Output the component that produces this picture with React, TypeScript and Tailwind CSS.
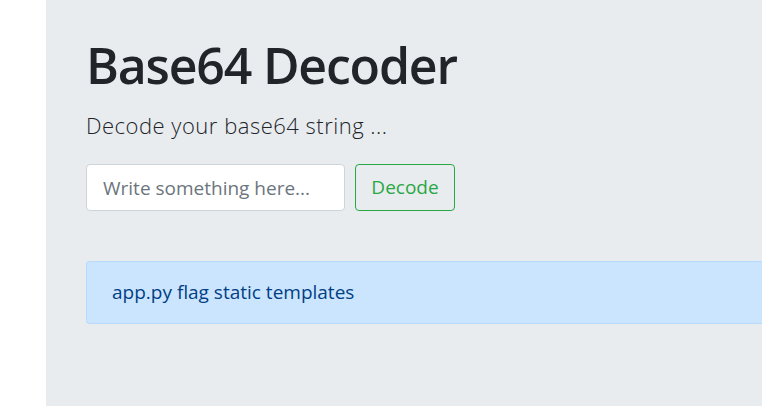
export default function App() {
  return (
    <div className="flex min-h-[406px] w-full overflow-hidden bg-white font-['Open_Sans',sans-serif]">
      <div className="w-[46px] shrink-0" />
      <div className="min-w-[900px] flex-1 bg-[#e9ecef] pl-[40px] pt-[35px] pb-[82px]">
        <h1 className="text-[50px] font-semibold leading-[1.2] tracking-[-1.2px] text-[#212529]">Base64 Decoder</h1>
        <p className="mt-[14px] text-[22px] font-light leading-[1.5] tracking-[0.5px] text-[#212529]">Decode your base64 string ...</p>

        <form className="mt-[22px] flex gap-[10px]" onSubmit={(e) => e.preventDefault()}>
          <input
            type="text"
            placeholder="Write something here..."
            className="h-[47px] w-[259px] rounded-[4px] border border-[#ced4da] bg-white px-[16px] text-[19px] text-[#495057] placeholder:text-[#6c757d] outline-none"
          />
          <button
            type="submit"
            className="h-[47px] w-[100px] rounded-[4px] border border-[#28a745] text-[19px] text-[#28a745]"
          >
            Decode
          </button>
        </form>

        <div className="mt-[50px] flex h-[63px] items-center rounded-l-[4px] border border-r-0 border-[#b8daff] bg-[#cce5ff] pl-[25px] text-[19px] text-[#004085]">
          app.py flag static templates
        </div>
      </div>
    </div>
  );
}
